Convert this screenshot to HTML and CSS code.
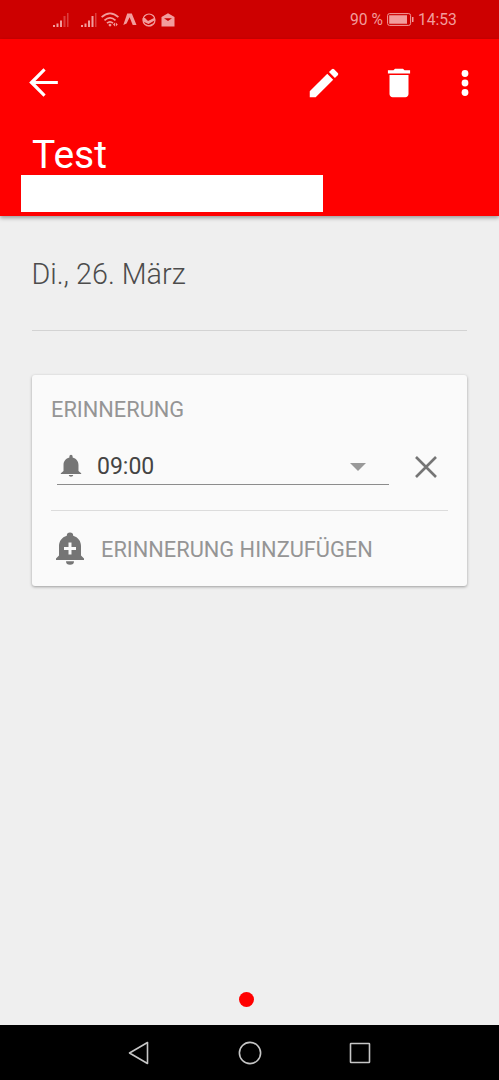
FILE: index.html
```
<!DOCTYPE html>
<html lang="de">
<head>
<meta charset="utf-8">
<title>Test</title>
<link rel="stylesheet" href="styles.css">
</head>
<body>
<div class="status">
  <svg class="signal" width="16" height="15" viewBox="0 0 16 15"><path d="M0 13h2v2H0zM3.500 11.500h2V15h-2zM7 8.500h2V15H7z"/><path class="faint" d="M10.500 4h2v11h-2zM14 1h1.500v14H14z"/></svg>
  <svg class="signal second" width="16" height="15" viewBox="0 0 16 15"><path d="M0 13h2v2H0zM3.500 11.500h2V15h-2zM7 8.500h2V15H7zM10.500 4h2v11h-2z"/><path class="faint" d="M14 1h1.500v14H14z"/></svg>
  <svg class="wifi" width="18" height="15" viewBox="0 0 18 15"><g fill="none" stroke="currentColor" stroke-width="1.700"><path d="M.6 5.200Q9-2.600 17.400 5.200M3.500 8.300Q9 3.300 14.500 8.300M6 11.200Q9 8.600 12 11.200"/></g><path d="M7.300 13L9 11.500l1.700 1.500L9 14.800zM12 12.500l2-2v4zM14.800 10.500l2 2-2 2z"/></svg>
  <svg class="letter" width="14" height="13" viewBox="0 0 14 13"><path d="M4.200.5h4.600L13.500 12h-3.800L6.600 4.300 3.600 10.500.3 12z"/></svg>
  <svg class="round" width="14" height="14" viewBox="0 0 14 14"><circle cx="7" cy="7" r="6" fill="none" stroke="currentColor" stroke-width="1.200"/><path d="M.6 5l2.400 0 3 3L13 4.500v2.700L6.500 11 1 8.500zM3 11.200l4 1 4.500-2-2.500 3H6z"/></svg>
  <svg class="mail" width="14" height="14" viewBox="0 0 14 14"><path d="M7 .3l6.500 3.700v9.500H.5V4zM3 5.300L7 8l4-2.700z" fill-rule="evenodd"/></svg>
  <span class="percent">90 %</span>
  <svg class="battery" width="27" height="13" viewBox="0 0 27 13"><rect x=".6" y=".6" width="23" height="11.800" rx="2" fill="none" stroke="currentColor"/><path d="M2.200 2.200H20v8.600H2.200zM25 4h1.500v5H25z"/></svg>
  <span class="clock">14:53</span>
</div>
<header class="appbar">
  <div class="actions">
    <svg class="back" width="43" height="43" viewBox="0 0 24 24"><path d="M20 11.100H7.500l5.700-5.800L12 4l-8 8 8 8 1.200-1.300-5.700-5.800H20z"/></svg>
    <svg class="edit" width="38" height="38" viewBox="0 0 24 24"><path d="M3 17.250V21h3.750L17.810 9.940l-3.750-3.750L3 17.250zM20.710 7.040a1 1 0 0 0 0-1.410l-2.340-2.340a1 1 0 0 0-1.410 0l-1.830 1.830 3.750 3.750 1.830-1.830z"/></svg>
    <svg class="trash" width="38" height="38" viewBox="0 0 24 24"><path d="M6 19c0 1.100.9 2 2 2h8c1.100 0 2-.9 2-2V7H6v12zM19 4h-3.500l-1-1h-5l-1 1H5v2h14V4z"/></svg>
    <svg class="more" width="38" height="38" viewBox="0 0 24 24"><circle cx="12" cy="6" r="2.150"/><circle cx="12" cy="12" r="2.150"/><circle cx="12" cy="18" r="2.150"/></svg>
  </div>
  <h1 class="title">Test</h1>
  <div class="blank"></div>
</header>
<main class="content">
  <div class="date">Di., 26. März</div>
  <section class="card">
    <div class="label">ERINNERUNG</div>
    <div class="reminder">
      <div class="select">
        <svg class="bell" width="26" height="26" viewBox="0 0 24 24"><path d="M12 22c1.100 0 2-.6 2-1.600h-4c0 1 .9 1.600 2 1.600zm6.900-5.500V11c0-3.500-2.100-6-5.400-6.900v-.9a1.500 1.500 0 0 0-3 0v.9C7.200 5 5.100 7.500 5.100 11v5.500L2.600 18.600v.8h18.800v-.8z"/></svg>
        <span class="time">09:00</span>
        <svg class="caret" width="16" height="8" viewBox="0 0 16 8"><path d="M0 0h16L8 8z"/></svg>
      </div>
      <svg class="close" width="22" height="22" viewBox="0 0 22 22"><path d="M1 1l20 20M21 1L1 21" fill="none" stroke="currentColor" stroke-width="2.600"/></svg>
    </div>
    <div class="add">
      <svg width="28" height="33" viewBox="0 0 28 33"><path fill-rule="evenodd" d="M14 .5a3.200 3.200 0 0 1 3.200 3.200c5 1.500 7.800 5.600 7.800 10.300v9.500l3 3V28H0v-1.500l3-3V14C3 9.300 5.800 5.200 10.800 3.700A3.200 3.200 0 0 1 14 .5zM12.500 10.500v4.500H8v3h4.500v4.500h3V18H20v-3h-4.500v-4.500z"/><path d="M10 29.200h8a4 3.500 0 0 1-8 0z"/></svg>
      <span class="add-text">ERINNERUNG HINZUFÜGEN</span>
    </div>
  </section>
  <div class="page-dot"></div>
</main>
<nav class="navbar">
  <svg width="22" height="24" viewBox="0 0 22 24"><path d="M19.500 1.500v21L1.500 12z"/></svg>
  <svg width="24" height="24" viewBox="0 0 24 24"><circle cx="12" cy="12" r="10.600"/></svg>
  <svg width="22" height="22" viewBox="0 0 22 22"><rect x="1.500" y="1.500" width="19" height="19" rx=".5"/></svg>
</nav>
</body>
</html>
```
FILE: styles.css
```
* { box-sizing: border-box; }
body {
  margin: 0;
  height: 1080px;
  display: flex;
  flex-direction: column;
  background: #efefef;
  font-family: Roboto, "Liberation Sans", sans-serif;
  overflow: hidden;
}
svg { display: block; flex: none; fill: currentColor; }

.status {
  display: flex;
  align-items: center;
  height: 39px;
  padding-left: 53px;
  background: #cd0000;
  color: #f29c9c;
  font-size: 15.600px;
  line-height: 39px;
  white-space: nowrap;
}
.faint { opacity: .4; }
.second { margin-left: 12px; }
.wifi { margin-left: 4px; }
.letter { margin-left: 4px; }
.round { margin-left: 5px; }
.mail { margin-left: 5px; }
.percent { width: 37px; margin-left: 175px; padding-top: 1px; }
.battery { margin-right: 4px; }
.clock { padding-top: 1px; }

.appbar {
  height: 177px;
  background: #f00;
  color: #fff;
  box-shadow: 0 2px 4px rgba(0, 0, 0, .35);
}
.actions {
  display: flex;
  align-items: center;
  height: 87px;
  padding-left: 22px;
}
.edit { margin-left: 239.500px; }
.trash { margin-left: 37.500px; }
.more { margin-left: 27.500px; }
.title {
  margin: 5px 0 0 32px;
  height: 44px;
  font-size: 39px;
  font-weight: 400;
  line-height: 48px;
}
.blank {
  width: 301.500px;
  height: 36.500px;
  margin-left: 21px;
  background: #fff;
}

.content {
  flex: 1;
  display: flex;
  flex-direction: column;
  padding: 33px 32px 0;
}
.date {
  height: 82px;
  border-bottom: 1px solid #d3d3d3;
  color: #4c4c4c;
  font-size: 28.700px;
  font-weight: 300;
  line-height: 50px;
  text-indent: -.5px;
}
.card {
  height: 211px;
  margin-top: 44px;
  padding: 21px 19px 0;
  border-radius: 3px;
  background: #fafafa;
  box-shadow: 0 1px 3px rgba(0, 0, 0, .35);
}
.label {
  height: 28px;
  color: #959595;
  font-size: 21.800px;
  line-height: 28px;
}
.reminder {
  display: flex;
  height: 87px;
  padding-left: 6px;
  border-bottom: 1px solid #dcdcdc;
  color: #757575;
}
.select {
  display: flex;
  align-items: center;
  width: 332px;
  height: 61px;
  padding-top: 24px;
  border-bottom: 1px solid #8c8c8c;
}
.bell { margin-left: 1px; }
.time {
  width: 253px;
  margin-left: 13px;
  padding-top: 1px;
  color: #444;
  font-size: 23px;
}
.caret { margin-top: 2px; color: #999; }
.close { margin: 32px 0 0 26px; }
.add {
  display: flex;
  align-items: center;
  gap: 17px;
  height: 75px;
  padding-left: 5px;
  color: #959595;
  font-size: 21.800px;
}
.add svg { color: #757575; }
.add-text { padding-top: 2px; }
.page-dot {
  width: 15px;
  height: 15px;
  margin: auto 0 18px 207px;
  border-radius: 50%;
  background: #f00;
}

.navbar {
  display: flex;
  align-items: center;
  height: 55px;
  padding-left: 128px;
  gap: 87.500px;
  background: #000;
  color: #c6c6c6;
}
.navbar svg {
  fill: none;
  stroke: currentColor;
  stroke-width: 1.600;
  stroke-linejoin: round;
}
```
